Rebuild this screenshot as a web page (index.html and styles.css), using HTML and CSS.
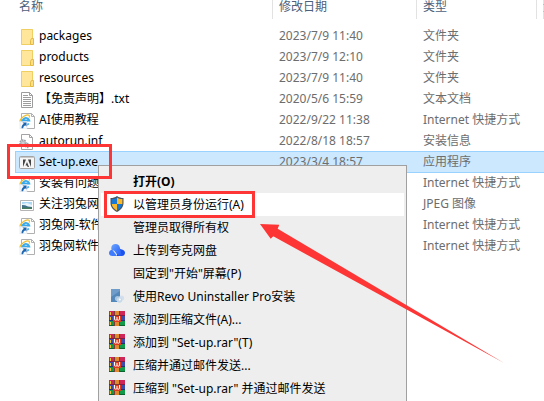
FILE: index.html
```
<!DOCTYPE html>
<html lang="zh-CN">
<head>
    <meta charset="UTF-8">
    <meta name="viewport" content="width=device-width, initial-scale=1.0">
    <title>Set-up.exe</title>
    <link rel="stylesheet" href="styles.css">
</head>
<body>
    <!-- shared icons -->
    <svg class="defs" width="0" height="0">
        <linearGradient id="sky" x1="0" y1="0" x2="1" y2="1">
            <stop offset="0" stop-color="#6aa5ff"/>
            <stop offset="1" stop-color="#1c55f5"/>
        </linearGradient>
        <symbol id="folder" viewBox="0 0 16 16">
            <path fill="#ffe69a" d="M2 0h12v16H2z"/>
            <path fill="none" stroke="#f0cf62" d="M2.500 .5h11v9M2.500 .5v15h9"/>
            <path fill="#ffdf80" stroke="#e3ba45" d="M12.500 9.500h2v6h-3v-4z"/>
        </symbol>
        <symbol id="text" viewBox="0 0 16 16">
            <path fill="#fff" stroke="#9c9c9c" d="M2.500 .5h8l3 3v12h-11z"/>
            <path fill="none" stroke="#9c9c9c" d="M10.500 .5v3h3M4 3.500h5M4 5.500h8M4 7.500h8M4 9.500h8M4 11.500h8M4 13.500h8"/>
        </symbol>
        <symbol id="link" viewBox="0 0 16 16">
            <path fill="#fff" stroke="#b0b0b0" d="M2.500 .5h10l3 3v12h-13z"/>
            <path fill="none" stroke="#b0b0b0" d="M12.500 .5v3h3"/>
            <path fill="none" stroke="#38a9ea" stroke-width="1.800" d="M9.800 10.500A3.500 3.500 0 1 1 10.300 7.500H4"/>
            <path fill="none" stroke="#f3bd2c" stroke-width="1.200" d="M.8 8.500C1.500 5 7 .8 10 2.200c.8.600.4 1.800 0 2.500"/>
            <path fill="#f7fafc" stroke="#d3dbe2" stroke-width=".5" d="M1 8.500h7V16H1z"/>
            <path fill="#1e66b0" d="M3.500 9.500h4v4l-1.300-1.300C4.800 13 4.200 14 4.200 15.300H2.500c0-2 .8-3.600 2.300-4.500z"/>
        </symbol>
        <symbol id="inf" viewBox="0 0 16 16">
            <path fill="#fff" stroke="#a3a3a3" d="M2.500 .5h8l3 3v12h-11z"/>
            <path fill="none" stroke="#a3a3a3" d="M10.500 .5v3h3"/>
            <circle cx="4" cy="9" r="3" fill="#d5d9dc" stroke="#9aa1a6" stroke-width="1.500" stroke-dasharray="1.700 .8"/>
            <circle cx="4" cy="9" r="1.300" fill="#fff" stroke="#8d959b" stroke-width=".7"/>
            <circle cx="8.500" cy="11.500" r="2" fill="#d5d9dc" stroke="#9aa1a6" stroke-width="1.400" stroke-dasharray="1.300 .7"/>
        </symbol>
        <symbol id="adobe" viewBox="0 0 16 16">
            <rect x=".5" y="1.500" width="15" height="12" rx="1" fill="#f6f6f6" stroke="#a5a5a5"/>
            <path fill="#c9c9c9" d="M1 2h14v1H1z"/>
            <path fill="#444" d="M4 4.500h3L4 12zM9 4.500h3V12zM8 7l2 5H8.700L8 10.500H6.500z"/>
        </symbol>
        <symbol id="picture" viewBox="0 0 16 16">
            <path fill="#fff" stroke="#b5b5b5" d="M1.500 3.500h13v10h-13z"/>
            <path fill="#a9d7f4" d="M3 5h10v7H3z"/>
            <path fill="#e8f4fb" d="M3 7l5-1 5 2v2H3z"/>
            <path fill="#42718d" d="M3 8l3 .3 3 1.200 4 .5v2H3z"/>
            <path fill="#467b5c" d="M3 10.500h10V12H3z"/>
        </symbol>
        <symbol id="shield" viewBox="0 0 16 16">
            <path fill="#46535e" d="M8 0c2 1.500 4 2 6.500 2v5c0 4-2.500 7-6.500 9-4-2-6.500-5-6.500-9V2C4 2 6 1.500 8 0z"/>
            <path fill="#1979d2" d="M8 1.500V8H2.600V3C5 3 6.500 2.500 8 1.500zM8 8h5.200c-.4 3-2.200 5-5.200 6.700z"/>
            <path fill="#fbba2d" d="M8 1.500C9.500 2.500 11 3 13.400 3v5H8zM2.700 8H8v6.700C5 13 3.100 11 2.700 8z"/>
        </symbol>
        <symbol id="cloud" viewBox="0 0 16 16">
            <path fill="#1b52ee" d="M8 8c1-1 2.500-1.200 4-.8 2.500.3 4 1.800 4 3.600 0 1.900-1.300 3.200-3.200 3.200H8z"/>
            <path fill="#3f7bfd" d="M0 11c0-2 1.300-3.300 3.300-3.300L8 14H3.300C1.300 14 0 12.900 0 11z"/>
            <path fill="url(#sky)" d="M2.300 6C2.300 3.500 4.200 2 6.500 2c2.500 0 4 1.500 4.500 4l1 5c.3 1.500.8 2.400 1.500 3-3 .2-4.800-.5-6-2.300C6.200 9.700 5 8 2.500 7.700c-.2-.5-.2-1-.2-1.700z"/>
        </symbol>
        <symbol id="revo" viewBox="0 0 16 16">
            <path fill="#5487ba" d="M2 1h9v13H2z"/>
            <path fill="#6f9cc9" d="M2 1h9v2L2 9z"/>
            <circle cx="8.500" cy="10.500" r="2.600" fill="#a9c5df"/>
            <circle cx="12.500" cy="10" r="2.600" fill="#d3dfec"/>
            <circle cx="10.500" cy="12" r="2.700" fill="#c6d8ea"/>
            <circle cx="10.800" cy="11.500" r="1" fill="#fff"/>
        </symbol>
        <symbol id="rar" viewBox="0 0 16 16">
            <path fill="#cf2659" d="M0 0h16v5H0z"/>
            <path fill="#3b4cab" d="M0 5h16v5H0z"/>
            <path fill="#12994a" d="M0 10h16v5H0z"/>
            <path fill="#851b43" d="M0 4h16v1H0z"/>
            <path fill="#242e78" d="M0 9h16v1H0z"/>
            <path fill="#0c632d" d="M0 14h16v1H0z"/>
            <path fill="#edc13e" d="M1 1h1v3H1zM1 6h1v3H1zM1 11h1v3H1z"/>
            <path fill="#7b3a35" d="M5 0h6v15H5z"/>
            <path fill="#e08a2d" d="M6 0h4v4H6zM6 11h4v4H6z"/>
            <path fill="#dd3a20" d="M4 5h8v6H4z"/>
            <path fill="none" stroke="#fff" d="M5.500 5v3c0 1.500 1.500 1.500 2.500.5 1 1 2.500 1 2.500-.5V5M8 6v2.500"/>
        </symbol>
    </svg>

    <table class="files">
        <thead>
            <tr>
                <th class="col-name">名称</th>
                <th class="col-date">修改日期</th>
                <th class="col-type">类型</th>
                <th>大小</th>
            </tr>
        </thead>
        <tbody>
            <tr>
                <td><svg class="icon"><use href="#folder"/></svg>packages</td>
                <td>2023/7/9 11:40</td>
                <td>文件夹</td>
                <td></td>
            </tr>
            <tr>
                <td><svg class="icon"><use href="#folder"/></svg>products</td>
                <td>2023/7/9 12:10</td>
                <td>文件夹</td>
                <td></td>
            </tr>
            <tr>
                <td><svg class="icon"><use href="#folder"/></svg>resources</td>
                <td>2023/7/9 11:40</td>
                <td>文件夹</td>
                <td></td>
            </tr>
            <tr>
                <td><svg class="icon"><use href="#text"/></svg>【免责声明】.txt</td>
                <td>2020/5/6 15:59</td>
                <td>文本文档</td>
                <td></td>
            </tr>
            <tr>
                <td><svg class="icon"><use href="#link"/></svg>AI使用教程</td>
                <td>2022/9/22 11:38</td>
                <td>Internet 快捷方式</td>
                <td></td>
            </tr>
            <tr>
                <td><svg class="icon"><use href="#inf"/></svg>autorun.inf</td>
                <td>2022/8/18 18:57</td>
                <td>安装信息</td>
                <td></td>
            </tr>
            <tr class="selected">
                <td><svg class="icon"><use href="#adobe"/></svg>Set-up.exe</td>
                <td>2023/3/4 18:57</td>
                <td>应用程序</td>
                <td></td>
            </tr>
            <tr>
                <td><svg class="icon"><use href="#link"/></svg>安装有问题</td>
                <td></td>
                <td>Internet 快捷方式</td>
                <td></td>
            </tr>
            <tr>
                <td><svg class="icon"><use href="#picture"/></svg>关注羽兔网</td>
                <td></td>
                <td>JPEG 图像</td>
                <td></td>
            </tr>
            <tr>
                <td><svg class="icon"><use href="#link"/></svg>羽兔网-软件</td>
                <td></td>
                <td>Internet 快捷方式</td>
                <td></td>
            </tr>
            <tr>
                <td><svg class="icon"><use href="#link"/></svg>羽兔网软件</td>
                <td></td>
                <td>Internet 快捷方式</td>
                <td></td>
            </tr>
        </tbody>
    </table>

    <div class="menu">
        <button class="default"><span class="icon"></span>打开(O)</button>
        <button class="active"><svg class="icon"><use href="#shield"/></svg>以管理员身份运行(A)</button>
        <button><span class="icon"></span>管理员取得所有权</button>
        <button><svg class="icon"><use href="#cloud"/></svg>上传到夸克网盘</button>
        <button><span class="icon"></span>固定到"开始"屏幕(P)</button>
        <button><svg class="icon"><use href="#revo"/></svg>使用Revo Uninstaller Pro安装</button>
        <button><svg class="icon"><use href="#rar"/></svg>添加到压缩文件(A)...</button>
        <button><svg class="icon"><use href="#rar"/></svg>添加到 "Set-up.rar"(T)</button>
        <button><svg class="icon"><use href="#rar"/></svg>压缩并通过邮件发送...</button>
        <button><svg class="icon"><use href="#rar"/></svg>压缩到 "Set-up.rar" 并通过邮件发送</button>
    </div>

    <!-- red marks over the file and the menu entry -->
    <svg class="marks" width="544" height="401" viewBox="0 0 544 401">
        <rect x="8.500" y="145.500" width="102" height="32"/>
        <rect x="105.500" y="192.500" width="148" height="24"/>
        <path d="M260 224l19.300.7-1.600 4L504 363 273.300 236.300l-2.600 2.400z"/>
    </svg>
</body>
</html>
```
FILE: styles.css
```
body {
    margin: 0;
    height: 100vh;
    overflow: hidden;
    position: relative;
    background-color: #fff;
    color: #000;
    font-family: "Noto Sans", "Noto Sans CJK SC", sans-serif;
    font-size: 12px;
}
.defs {
    position: absolute;
}
.files {
    width: calc(100% - 15px);
    margin-left: 15px;
    table-layout: fixed;
    border-spacing: 0;
    line-height: 21px;
}
.files th,
.files td {
    padding: 0 0 0 6px;
    text-align: left;
    white-space: nowrap;
}
.files th {
    height: 19px;
    box-sizing: border-box;
    border-right: 1px solid #e2e2e2;
    color: #4c607a;
    font-weight: normal;
    line-height: 13px;
    vertical-align: top;
}
.files th:first-child,
.files td:first-child {
    padding-left: 4px;
}
.files .col-name {
    width: 258px;
}
.files .col-date {
    width: 144px;
}
.files .col-type {
    width: 120px;
}
.files tbody::before {
    content: "";
    display: block;
    height: 6px;
}
.files td {
    height: 21px;
    color: #6d6d6d;
}
.files td:first-child {
    color: #000;
}
.icon {
    display: inline-block;
    width: 16px;
    height: 16px;
    flex: none;
}
.files .icon {
    margin-right: 4px;
    vertical-align: middle;
}
.selected td {
    background-color: #cce8ff;
    box-shadow: inset 0 1px 0 #99d1ff, 0 1px 0 #99d1ff;
}
.selected td:first-child {
    box-shadow: inset 1px 1px 0 #99d1ff, 0 1px 0 #99d1ff;
}

/* context menu */
.menu {
    position: absolute;
    top: 165px;
    left: 98px;
    width: 303px;
    padding: 4px 2px;
    border: 1px solid #a0a0a0;
    background-color: #eee;
}
.menu button {
    display: flex;
    align-items: center;
    gap: 8px;
    width: 100%;
    height: 23px;
    padding: 0 8px 2px;
    border: none;
    background: none;
    color: #000;
    font: inherit;
    white-space: nowrap;
}
.menu .default {
    font-weight: bold;
}
.menu .active {
    background-color: #fff;
}

.marks {
    position: absolute;
    top: 0;
    left: 0;
    pointer-events: none;
}
.marks rect {
    fill: none;
    stroke: #fd3635;
    stroke-width: 3px;
}
.marks path {
    fill: #fd3635;
}
```
